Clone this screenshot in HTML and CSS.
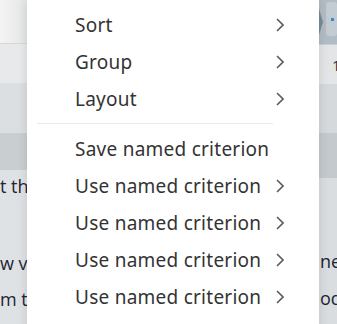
FILE: index.html
```html
<!DOCTYPE html>
<html>
<head>
<meta charset="utf-8">
<link rel="stylesheet" href="styles.css">
</head>
<body>
<div class="page">
  <div class="col-left">
    <div class="band b-top"></div>
    <div class="band b-2"></div>
    <div class="band b-3"></div>
    <div class="band b-4"></div>
    <div class="band b-5">
      <p class="bg-text t1">t th</p>
      <p class="bg-text t2">w v</p>
      <p class="bg-text t3">m t</p>
    </div>
  </div>
  <div class="col-mid"></div>
  <div class="col-right">
    <div class="band r-top">
      <span class="r-arrow"></span>
      <span class="r-btn"><span class="r-dot"></span></span>
    </div>
    <div class="band r-2"><span class="r-glyph">1</span></div>
    <div class="band r-3"></div>
    <div class="band r-4"></div>
    <div class="band r-5">
      <p class="bg-text rt1">ne</p>
      <p class="bg-text rt2">od</p>
    </div>
  </div>

  <div class="menu">
    <div class="item"><span>Sort</span><svg class="chev" viewBox="0 0 8 14"><polyline points="1,1 7,7 1,13"/></svg></div>
    <div class="item"><span>Group</span><svg class="chev" viewBox="0 0 8 14"><polyline points="1,1 7,7 1,13"/></svg></div>
    <div class="item"><span>Layout</span><svg class="chev" viewBox="0 0 8 14"><polyline points="1,1 7,7 1,13"/></svg></div>
    <div class="sep"></div>
    <div class="item"><span>Save named criterion</span></div>
    <div class="item"><span>Use named criterion</span><svg class="chev" viewBox="0 0 8 14"><polyline points="1,1 7,7 1,13"/></svg></div>
    <div class="item"><span>Use named criterion</span><svg class="chev" viewBox="0 0 8 14"><polyline points="1,1 7,7 1,13"/></svg></div>
    <div class="item"><span>Use named criterion</span><svg class="chev" viewBox="0 0 8 14"><polyline points="1,1 7,7 1,13"/></svg></div>
    <div class="item"><span>Use named criterion</span><svg class="chev" viewBox="0 0 8 14"><polyline points="1,1 7,7 1,13"/></svg></div>
  </div>
</div>
</body>
</html>
```
FILE: styles.css
```css
html, body {
  margin: 0;
  padding: 0;
}
body {
  width: 337px;
  height: 324px;
  overflow: hidden;
  font-family: "Noto Sans", "Open Sans", sans-serif;
}
.page {
  position: relative;
  width: 337px;
  height: 324px;
  display: grid;
  grid-template-columns: 27px 1fr 18px;
  overflow: hidden;
}
.col-left, .col-right {
  display: flex;
  flex-direction: column;
}
.band { flex: none; }
.b-top {
  height: 43px;
  background: linear-gradient(to right, #f4f4f4, #e4e5e6);
  border-bottom: 1px solid #d6d8da;
}
.b-2 { height: 39px; background: #e7e9eb; }
.b-3 { height: 50px; background: #dcdfe1; }
.b-4 { height: 37px; background: #c9ced1; }
.b-5 {
  flex: 1;
  background: #dfe2e4;
  position: relative;
}
.bg-text {
  margin: 0;
  font-family: "Open Sans", "Noto Sans", sans-serif;
  font-size: 18px;
  color: #1b2633;
  white-space: nowrap;
  line-height: 20px;
}
.t1 { margin-top: 6px; }
.t2 { margin-top: 57px; }
.t3 { margin-top: 16px; }

.r-top {
  height: 44px;
  background: #b2bcc4;
  border-bottom: 1px solid #c7cdd2;
  display: flex;
  align-items: center;
  gap: 3px;
}
.r-arrow {
  width: 0;
  height: 0;
  border-top: 13px solid transparent;
  border-bottom: 13px solid transparent;
  border-left: 4px solid #7a8c9a;
}
.r-btn {
  width: 16px;
  height: 34px;
  margin-top: -6px;
  border-radius: 3px;
  background: #c3ccd2;
  display: flex;
  align-items: center;
  padding-left: 5px;
}
.r-dot {
  width: 3px;
  height: 3px;
  background: #2f8fc9;
}
.r-2 {
  height: 39px;
  background: #e3e5e7;
  position: relative;
}
.r-glyph {
  display: block;
  padding: 10px 0 0 13px;
  font-size: 15px;
  color: #333;
  font-family: "Open Sans", sans-serif;
}
.r-3 { height: 49px; background: #d5d9dc; }
.r-4 { height: 45px; background: #c3c9cd; }
.r-5 {
  flex: 1;
  background: #dadde0;
}
.rt1 { margin-top: 73px; margin-left: 1px; }
.rt2 { margin-top: 17px; margin-left: 1px; color: #1b2633; }

.menu {
  position: absolute;
  left: 27px;
  top: 0;
  width: 292px;
  height: 340px;
  background: #ffffff;
  box-shadow: 0 0 10px rgba(0, 0, 0, 0.12);
  padding: 6px 35px 0 48px;
  box-sizing: border-box;
  display: flex;
  flex-direction: column;
}
.item {
  height: 37px;
  display: flex;
  align-items: center;
  justify-content: space-between;
  font-size: 19px;
  letter-spacing: 0.25px;
  color: #333333;
  white-space: nowrap;
}
.chev {
  width: 8px;
  height: 14px;
  flex: none;
}
.chev polyline {
  fill: none;
  stroke: #5c5c5c;
  stroke-width: 1.6;
}
.sep {
  height: 13px;
  margin: 0 11px 0 -38px;
  display: flex;
  align-items: center;
}
.sep::before {
  content: "";
  flex: 1;
  height: 1px;
  background: #ebebeb;
}
```
